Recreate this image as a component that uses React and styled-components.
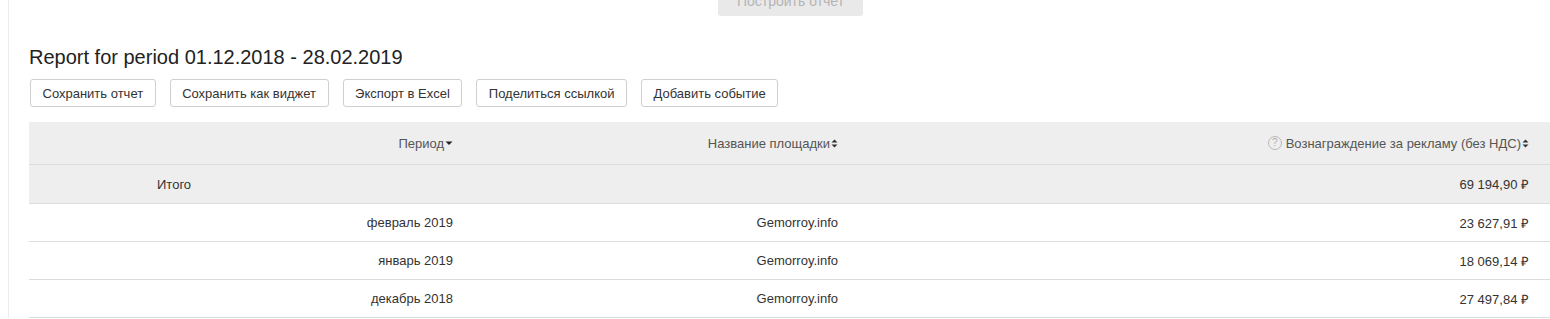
import React from "react";
import styled, { createGlobalStyle } from "styled-components";

const Global = createGlobalStyle`
  html, body { margin: 0; padding: 0; background: #fff; }
  body { font-family: "Liberation Sans", Arial, sans-serif; color: #333; overflow: hidden; }
`;

const Page = styled.div`
  margin-left: 8px;
  border-left: 1px solid #ececec;
  padding-left: 20px;
  min-height: 319px;
  box-sizing: border-box;
`;

const TopBar = styled.div`
  display: flex;
  justify-content: flex-start;
  padding-left: 689px;
  margin-top: -14px;
`;

const BuildButton = styled.button`
  width: 145px;
  height: 30px;
  border: none;
  border-radius: 3px;
  background: #e9e9e9;
  color: #b4b4b4;
  font-family: inherit;
  font-size: 14px;
  padding: 0;
`;

const Title = styled.h1`
  margin: 29px 0 0 0;
  font-size: 20px;
  line-height: 24px;
  font-weight: normal;
  color: #222;
`;

const Toolbar = styled.div`
  display: flex;
  gap: 14px;
  margin-top: 10px;
  padding-left: 1px;
`;

const ToolButton = styled.button`
  height: 28px;
  padding: 0 11.5px;
  border: 1px solid #cfcfcf;
  border-radius: 3px;
  background: #fff;
  color: #333;
  font-family: inherit;
  font-size: 13px;
`;

const Table = styled.div`
  margin-top: 15px;
  display: grid;
  grid-template-columns: 436px 385px 1fr;
`;

const Row = styled.div`
  display: contents;
`;

const Cell = styled.div`
  height: ${(p) => p.$h || 38}px;
  box-sizing: border-box;
  display: flex;
  align-items: center;
  justify-content: ${(p) => (p.$left ? "flex-start" : "flex-end")};
  padding: ${(p) => (p.$left ? "0 0 0 128px" : p.$last ? "0 21px 0 0" : "0 12px 0 0")};
  background: ${(p) => (p.$gray ? "#eeeeee" : "#fff")};
  border-bottom: 1px solid #dcdcdc;
  font-size: 13px;
  color: ${(p) => (p.$head ? "#555" : "#333")};
  white-space: nowrap;
`;

const HelpIcon = styled.span`
  display: inline-flex;
  align-items: center;
  justify-content: center;
  width: 12px;
  height: 12px;
  border: 1px solid #b8b8b8;
  border-radius: 50%;
  color: #b0b0b0;
  font-size: 10px;
  line-height: 1;
  margin-right: 4px;
`;

const SortIcon = ({ dir }) =>
  dir === "down" ? (
    <svg width="8" height="8" viewBox="0 0 8 8" style={{ marginLeft: 1 }}>
      <path d="M0.5 2.5 L7.5 2.5 L4 6 Z" fill="#222" />
    </svg>
  ) : (
    <svg width="7" height="9" viewBox="0 0 7 9" style={{ marginLeft: 1 }}>
      <path d="M0.5 3.5 L6.5 3.5 L3.5 0.5 Z" fill="#333" />
      <path d="M0.5 5.5 L6.5 5.5 L3.5 8.5 Z" fill="#333" />
    </svg>
  );

const rows = [
  ["февраль 2019", "Gemorroy.info", "23 627,91 ₽"],
  ["январь 2019", "Gemorroy.info", "18 069,14 ₽"],
  ["декабрь 2018", "Gemorroy.info", "27 497,84 ₽"],
];

const buttons = [
  "Сохранить отчет",
  "Сохранить как виджет",
  "Экспорт в Excel",
  "Поделиться ссылкой",
  "Добавить событие",
];

export default function App() {
  return (
    <>
      <Global />
      <Page>
        <TopBar>
          <BuildButton>Построить отчет</BuildButton>
        </TopBar>
        <Title>Report for period 01.12.2018 - 28.02.2019</Title>
        <Toolbar>
          {buttons.map((b) => (
            <ToolButton key={b}>{b}</ToolButton>
          ))}
        </Toolbar>
        <Table>
          <Row>
            <Cell $h={43} $head $gray>
              Период
              <SortIcon dir="down" />
            </Cell>
            <Cell $h={43} $head $gray>
              Название площадки
              <SortIcon />
            </Cell>
            <Cell $h={43} $head $gray $last>
              <HelpIcon>?</HelpIcon>
              Вознаграждение за рекламу (без НДС)
              <SortIcon />
            </Cell>
          </Row>
          <Row>
            <Cell $h={39} $gray $left>
              Итого
            </Cell>
            <Cell $h={39} $gray />
            <Cell $h={39} $gray $last>
              69 194,90 ₽
            </Cell>
          </Row>
          {rows.map((r) => (
            <Row key={r[0]}>
              <Cell>{r[0]}</Cell>
              <Cell>{r[1]}</Cell>
              <Cell $last>{r[2]}</Cell>
            </Row>
          ))}
        </Table>
      </Page>
    </>
  );
}
